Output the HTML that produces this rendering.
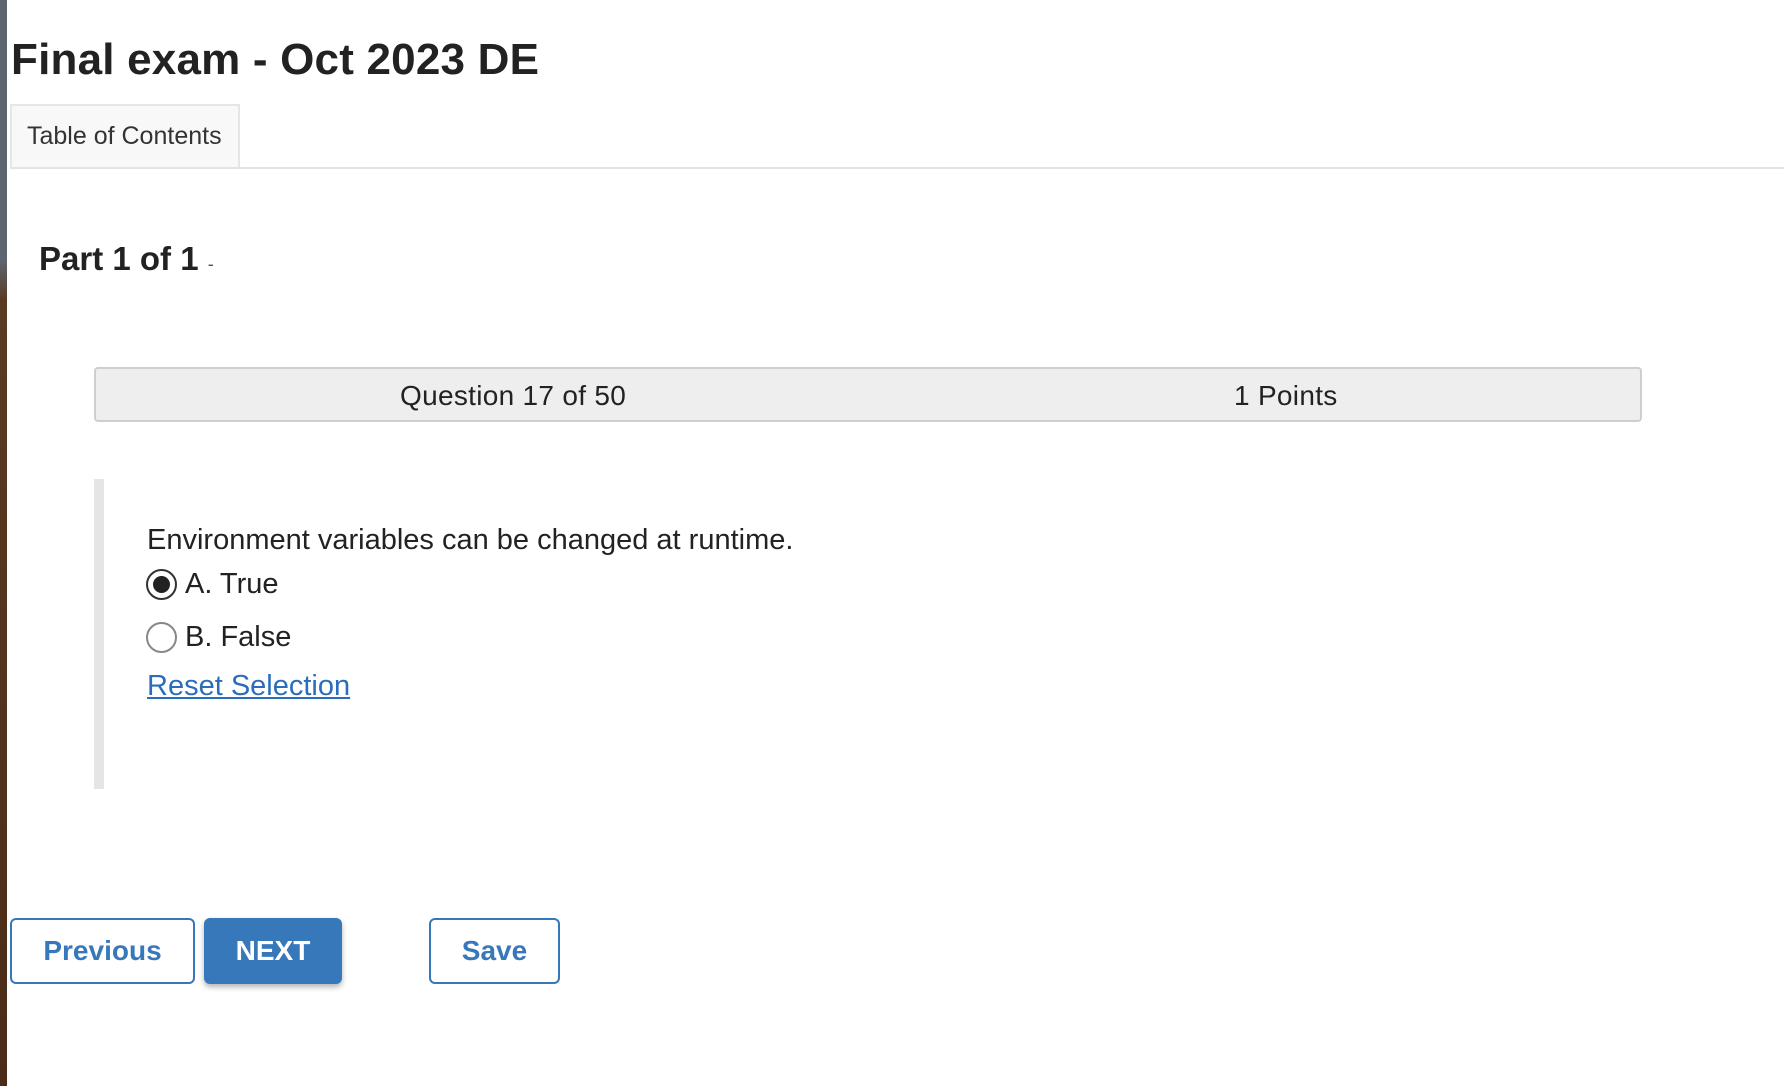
<!DOCTYPE html>
<html><head><meta charset="utf-8"><style>
*{margin:0;padding:0;box-sizing:border-box}
body{width:1784px;height:1086px;background:#fff;font-family:"Liberation Sans",sans-serif;color:#222;position:relative;overflow:hidden}
.strip{position:absolute;left:0;top:0;width:7px;height:1086px;background:linear-gradient(#5c6670 0,#5c6670 260px,#5a3a22 300px,#4a2c18 100%)}
.a{position:absolute;white-space:nowrap}
h1{position:absolute;left:11px;top:35px;font-size:44px;font-weight:bold;color:#222;letter-spacing:0.2px}
.tab{position:absolute;left:10px;top:104px;width:230px;height:65px;border:2px solid #e6e6e6;border-bottom:none;background:#f8f8f8;font-size:25px;color:#333;padding:16px 0 0 15px}
.line{position:absolute;left:10px;right:0;top:167px;height:2px;background:#e4e4e4}
.bar{position:absolute;left:94px;top:367px;width:1548px;height:55px;background:#eee;border:2px solid #cfcfcf;border-radius:4px;font-size:28px;color:#222}
.gray{position:absolute;left:94px;top:479px;width:10px;height:310px;background:#e5e5e5}
.radio{position:absolute;width:31px;height:31px;border-radius:50%;border:2px solid #888;background:#fff}
.btn{position:absolute;top:918px;height:66px;border:2px solid #3778bb;border-radius:6px;color:#3778bb;font-weight:bold;font-size:28px;display:flex;align-items:center;justify-content:center;background:#fff}
.t{font-size:29px}
</style></head><body>
<div class="strip"></div>
<h1>Final exam - Oct 2023 DE</h1>
<div class="tab">Table of Contents</div>
<div class="line"></div>
<div class="a" style="left:39px;top:240px;font-size:33px;font-weight:bold">Part 1 of 1 <span style="font-size:18px;font-weight:normal;color:#555">-</span></div>
<div class="bar"><span class="a" style="left:304px;top:11px;letter-spacing:0.3px">Question 17 of 50</span><span class="a" style="left:1138px;top:11px;letter-spacing:0.3px">1 Points</span></div>
<div class="gray"></div>
<div class="a t" style="left:147px;top:524px">Environment variables can be changed at runtime.</div>
<div class="radio" style="left:146px;top:569px;border-color:#333"><div style="position:absolute;left:5px;top:5px;width:17px;height:17px;border-radius:50%;background:#222"></div></div>
<div class="a t" style="left:185px;top:568px">A. True</div>
<div class="radio" style="left:146px;top:622px"></div>
<div class="a t" style="left:185px;top:621px">B. False</div>
<div class="a t" style="left:147px;top:670px;color:#2a6ebb;text-decoration:underline">Reset Selection</div>
<div class="btn" style="left:10px;width:185px">Previous</div>
<div class="btn" style="left:204px;width:138px;background:#3778bb;color:#fff;box-shadow:0 3px 6px rgba(0,0,0,.3)">NEXT</div>
<div class="btn" style="left:429px;width:131px">Save</div>
</body></html>
